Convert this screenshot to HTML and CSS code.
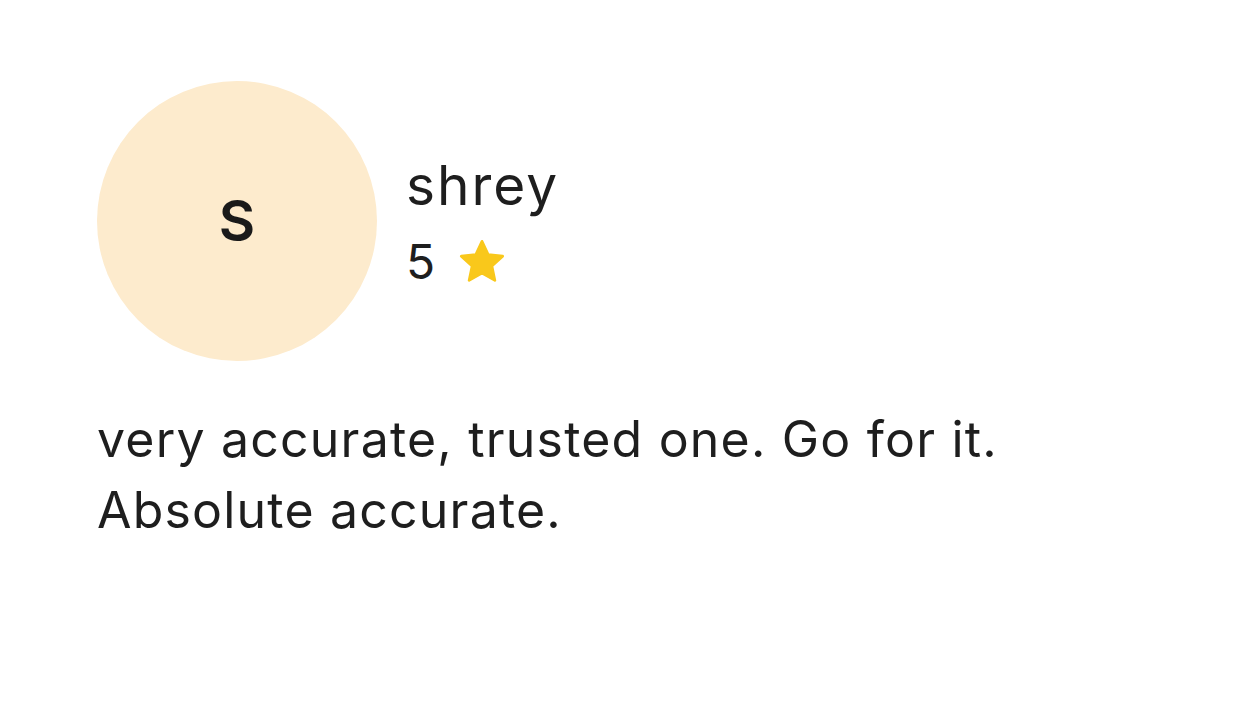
FILE: index.html
```html
<!DOCTYPE html>
<html>
<head>
<meta charset="utf-8">
<link rel="stylesheet" href="styles.css">
</head>
<body>
<div class="review">
  <div class="review-head">
    <div class="avatar">S</div>
    <div class="meta">
      <div class="name">shrey</div>
      <div class="rating">
        <span class="score">5</span>
        <svg class="star" viewBox="0 0 24 24" width="54" height="54"><path fill="#F9C81B" stroke="#F9C81B" stroke-width="1.2" stroke-linejoin="round" d="M12 2.8l2.75 5.9 6.45.72-4.8 4.4 1.33 6.36L12 16.95l-5.73 3.23 1.33-6.36-4.8-4.4 6.45-.72z"/></svg>
      </div>
    </div>
  </div>
  <p class="text">very accurate, trusted one. Go for it.<br>Absolute accurate.</p>
</div>
</body>
</html>
```
FILE: styles.css
```css
html, body {
  margin: 0;
  padding: 0;
  background: #ffffff;
}
body {
  font-family: "Inter", "DejaVu Sans", sans-serif;
  color: #1e1e1e;
}
.review {
  padding: 81px 0 0 97px;
}
.review-head {
  display: flex;
  align-items: center;
  gap: 29px;
}
.avatar {
  width: 280px;
  height: 280px;
  border-radius: 50%;
  background: #fdebcd;
  display: flex;
  align-items: center;
  justify-content: center;
  font-size: 56px;
  font-weight: 600;
  color: #1a1a1a;
}
.meta {
  display: flex;
  flex-direction: column;
  padding-top: 5px;
}
.name {
  font-size: 55px;
  line-height: 60px;
  letter-spacing: 2px;
}
.rating {
  display: flex;
  align-items: center;
  gap: 20px;
  margin-top: 17px;
  font-size: 48px;
  line-height: 60px;
}
.star {
  display: block;
}
.text {
  margin: 43px 0 0;
  font-size: 50px;
  line-height: 71px;
  letter-spacing: 1.2px;
}
```
